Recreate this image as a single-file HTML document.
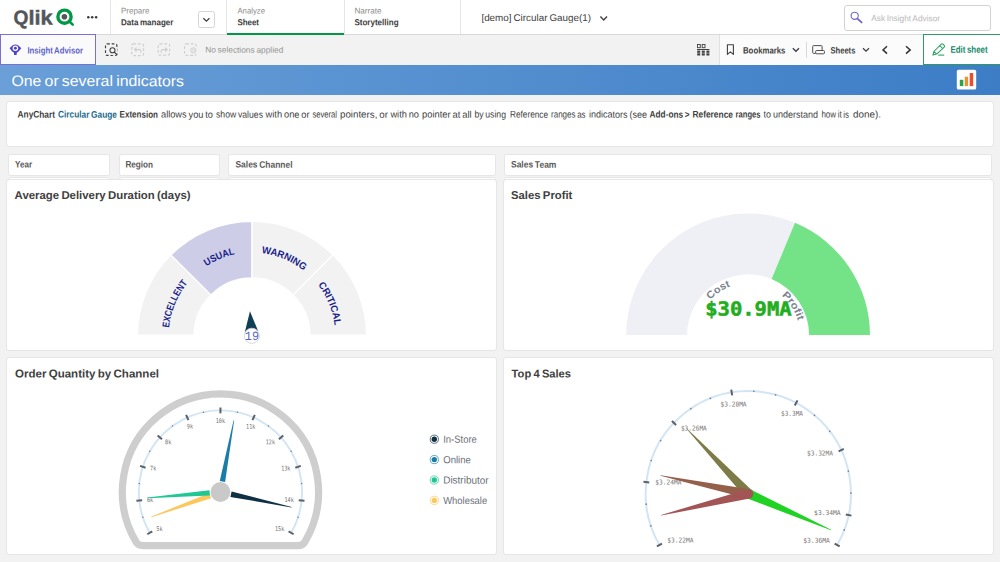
<!DOCTYPE html>
<html lang="en"><head><meta charset="utf-8"><title>[demo] Circular Gauge(1) - One or several indicators</title>
<style>
*{box-sizing:border-box;margin:0;padding:0}
html,body{width:1000px;height:562px;overflow:hidden;background:#f2f2f2;font-family:"Liberation Sans", sans-serif}
#app{position:relative;width:1000px;height:562px;overflow:hidden;background:#f2f2f2}
.abs{position:absolute}
.t{position:absolute;left:0;top:0;white-space:pre;line-height:1em;word-spacing:-0.075em;transform-origin:0 0;display:block}
#topbar{position:absolute;left:0;top:0;width:1000px;height:34.5px;background:#fff;border-bottom:1px solid #d9d9d9}
.vdiv{position:absolute;top:0;width:1px;height:34px;background:#e6e6e6}
#toolbar{position:absolute;left:0;top:34.5px;width:1000px;height:31px;background:#f2f2f2}
#toolbar-right{position:absolute;left:718.5px;top:34.5px;width:281.5px;height:31px;background:#fbfbfb;border-left:1px solid #e0e0e0}
#insight{position:absolute;left:0;top:34.4px;width:95.8px;height:30.6px;background:#fafafa;border:1px solid #7b6fd3}
#editbtn{position:absolute;left:923px;top:34.2px;width:77.5px;height:30.6px;background:#fff;border:1px solid #2f9a62}
#titlebar{position:absolute;left:0;top:65.2px;width:1000px;height:29.4px;background:linear-gradient(90deg,#6a9fd8 0%,#3c7dc6 100%)}
.card{position:absolute;background:#fff;border:1px solid #e5e6e5;border-radius:3px}
#search{position:absolute;left:844px;top:5px;width:146.5px;height:25.5px;border:1px solid #d2d2d2;border-radius:3px;background:#fff}
#ddbtn{position:absolute;left:198px;top:11.3px;width:16.8px;height:16.8px;border:1px solid #d6d6d6;border-radius:2.5px;background:#fff}
svg{position:absolute;left:0;top:0;overflow:visible}
</style></head><body><div id="app">
<div class="card" id="textbox" style="left:6px;top:101px;width:988px;height:46px"></div>
<div class="card filter" style="left:8px;top:154px;width:102px;height:22px;border-radius:2.5px"></div>
<div class="card filter" style="left:8px;top:176.6px;width:102px;height:12px;border-radius:2.5px"></div>
<div class="card filter" style="left:119px;top:154px;width:101px;height:22px;border-radius:2.5px"></div>
<div class="card filter" style="left:119px;top:176.6px;width:101px;height:12px;border-radius:2.5px"></div>
<div class="card filter" style="left:228px;top:154px;width:268px;height:22px;border-radius:2.5px"></div>
<div class="card filter" style="left:228px;top:176.6px;width:268px;height:12px;border-radius:2.5px"></div>
<div class="card filter" style="left:504px;top:154px;width:488px;height:22px;border-radius:2.5px"></div>
<div class="card filter" style="left:504px;top:176.6px;width:488px;height:12px;border-radius:2.5px"></div>
<div class="card panel" id="p1" style="left:6px;top:179px;width:491px;height:172px"></div>
<div class="card panel" id="p2" style="left:503px;top:179px;width:491px;height:172px"></div>
<div class="card panel" id="p3" style="left:6px;top:357px;width:491px;height:198px"></div>
<div class="card panel" id="p4" style="left:503px;top:357px;width:491px;height:198px"></div>
<div id="topbar"></div>
<div class="vdiv" style="left:110.2px"></div>
<div class="vdiv" style="left:226.4px"></div>
<div class="vdiv" style="left:343.6px"></div>
<div class="vdiv" style="left:460.4px"></div>
<div class="abs" style="left:227px;top:32.9px;width:116.8px;height:2.1px;background:#009845"></div>
<div id="ddbtn"></div><div id="search"></div>
<div id="toolbar"></div><div id="toolbar-right"></div>
<div class="abs" style="left:806.2px;top:42px;width:1px;height:16.4px;background:#d9d9d9"></div>
<div id="insight"></div><div id="editbtn"></div><div id="titlebar"></div>
<svg width="1000" height="562" viewBox="0 0 1000 562">
<g id="icons"><circle cx="64.5" cy="16.7" r="6.6" fill="none" stroke="#009845" stroke-width="3.4"/>
<circle cx="64.4" cy="16.7" r="2.8" fill="#54565a"/>
<line x1="69.2" y1="21.2" x2="72.7" y2="24.6" stroke="#009845" stroke-width="2.6" stroke-linecap="round"/>
<circle cx="88.3" cy="17.3" r="1.25" fill="#3a3a3a"/>
<circle cx="92.2" cy="17.3" r="1.25" fill="#3a3a3a"/>
<circle cx="96.1" cy="17.3" r="1.25" fill="#3a3a3a"/>
<path d="M203.4 18.2L206.4 21.2L209.4 18.2" fill="none" stroke="#404040" stroke-width="1.3"/>
<path d="M600.4 16.6L603.7 19.9L607 16.6" fill="none" stroke="#404040" stroke-width="1.4"/>
<circle cx="854.7" cy="15.8" r="3.6" fill="none" stroke="#6f66c9" stroke-width="1.1"/>
<line x1="857.4" y1="18.6" x2="861.6" y2="22.4" stroke="#6f66c9" stroke-width="1.9" stroke-linecap="round"/>
<path d="M9.6 48.2Q15.4 40.6 21.3 48.2Q18.2 52.2 16.7 52.7L16.7 54.9L14.0 54.9L14.0 52.7Q12.6 52.2 9.6 48.2Z" fill="#4f43c6"/>
<circle cx="15.4" cy="48.2" r="2.75" fill="#fff"/>
<circle cx="15.4" cy="48.2" r="1.45" fill="#4f43c6"/>
<rect x="105.5" y="43.9" width="11.4" height="11.4" rx="1.6" fill="none" stroke="#404040" stroke-width="1.15" stroke-dasharray="2.7 1.9"/>
<circle cx="113.2" cy="51.0" r="4.3" fill="#f2f2f2"/>
<circle cx="112.5" cy="50.2" r="2.55" fill="none" stroke="#404040" stroke-width="1.05"/>
<line x1="114.4" y1="52.1" x2="116.9" y2="54.6" stroke="#404040" stroke-width="1.25" stroke-linecap="round"/>
<rect x="131.8" y="43.8" width="11.8" height="11.8" rx="1.6" fill="none" stroke="#cfcfcf" stroke-width="1.15" stroke-dasharray="2.7 1.9"/>
<path d="M134.6 49.6L140.2 49.6Q141.4 50.8 141.0 53.0M136.6 47.6L134.6 49.6L136.6 51.6" fill="none" stroke="#cfcfcf" stroke-width="1.1"/>
<rect x="158.2" y="43.8" width="11.4" height="11.4" rx="1.6" fill="none" stroke="#cfcfcf" stroke-width="1.15" stroke-dasharray="2.7 1.9"/>
<path d="M167.2 49.6L162.0 49.6Q160.8 50.8 161.2 53.0M165.2 47.6L167.2 49.6L165.2 51.6" fill="none" stroke="#cfcfcf" stroke-width="1.1"/>
<rect x="184.6" y="43.8" width="11.6" height="11.6" rx="1.6" fill="none" stroke="#cfcfcf" stroke-width="1.15" stroke-dasharray="2.7 1.9"/>
<rect x="189.8" y="46.8" width="8" height="7.2" fill="#f2f2f2"/>
<circle cx="193.3" cy="50.4" r="2.6" fill="none" stroke="#cfcfcf" stroke-width="1.0"/>
<path d="M192.1 49.2L194.5 51.6M194.5 49.2L192.1 51.6" stroke="#cfcfcf" stroke-width="0.9"/>
<rect x="697.5" y="44.5" width="2.8" height="3.2" fill="none" stroke="#404040" stroke-width="0.9"/>
<rect x="702.2" y="44.5" width="2.8" height="3.2" fill="none" stroke="#404040" stroke-width="0.9"/>
<rect x="697.0" y="49.0" width="12.4" height="1.0" fill="#404040"/>
<rect x="697.2" y="50.6" width="3.0" height="2.2" fill="#404040"/>
<rect x="697.2" y="53.3" width="3.0" height="2.2" fill="#404040"/>
<rect x="701.8" y="50.6" width="3.0" height="2.2" fill="#404040"/>
<rect x="701.8" y="53.3" width="3.0" height="2.2" fill="#404040"/>
<rect x="706.4" y="50.6" width="3.0" height="2.2" fill="#404040"/>
<rect x="706.4" y="53.3" width="3.0" height="2.2" fill="#404040"/>
<path d="M727.4 44.8L733.4 44.8L733.4 54.4L730.4 51.8L727.4 54.4Z" fill="none" stroke="#404040" stroke-width="1.1" stroke-linejoin="round"/>
<path d="M792.8 48.2L795.9 51.3L799.0 48.2" fill="none" stroke="#404040" stroke-width="1.3"/>
<path d="M815.6 53.4L813.6 53.4Q812.7 53.4 812.7 52.5L812.7 46.5Q812.7 45.6 813.6 45.6L821.2 45.6Q822.1 45.6 822.1 46.5L822.1 50.4" fill="none" stroke="#505050" stroke-width="1.0"/>
<rect x="815.7" y="50.5" width="8.7" height="3.3" rx="0.8" fill="none" stroke="#505050" stroke-width="1.0"/>
<path d="M863.0 48.2L866.0 51.2L869.0 48.2" fill="none" stroke="#404040" stroke-width="1.3"/>
<path d="M887.0 46.2L883.0 49.9L887.0 53.6" fill="none" stroke="#333" stroke-width="1.5"/>
<path d="M906.0 46.2L910.2 49.9L906.0 53.6" fill="none" stroke="#333" stroke-width="1.5"/>
<path d="M932.9 55.1L933.9 51.5L941.2 44.2Q942.1 43.5 943.0 44.2L944.2 45.4Q945.0 46.3 944.2 47.2L936.7 54.1Z M939.8 45.6L942.7 48.5 M933.9 51.5L936.6 54.1" fill="none" stroke="#27a35d" stroke-width="1.05" stroke-linejoin="round"/>
<line x1="938.2" y1="55.1" x2="944.2" y2="55.1" stroke="#27a35d" stroke-width="1.1"/>
<rect x="956.8" y="69.8" width="19.4" height="19.8" rx="1.6" fill="#fff"/>
<rect x="959.8" y="79.8" width="3.5" height="6.3" fill="#2da24a"/>
<rect x="964.7" y="76.7" width="3.4" height="9.4" fill="#e2963c"/>
<rect x="969.7" y="73.0" width="3.5" height="13.1" fill="#ea4e2b"/></g>
<g id="gauge1"><clipPath id="g1clip"><rect x="120" y="200" width="270" height="134.6"/></clipPath>
<path d="M137.40 335.90A114.6 114.6 0 0 1 170.97 254.87L210.99 294.89A58.0 58.0 0 0 0 194.00 335.90Z" fill="#f2f2f2" stroke="#fff" stroke-width="1.3" clip-path="url(#g1clip)"/>
<path d="M170.97 254.87A114.6 114.6 0 0 1 252.00 221.30L252.00 277.90A58.0 58.0 0 0 0 210.99 294.89Z" fill="#cdcde8" stroke="#fff" stroke-width="1.3" clip-path="url(#g1clip)"/>
<path d="M252.00 221.30A114.6 114.6 0 0 1 333.03 254.87L293.01 294.89A58.0 58.0 0 0 0 252.00 277.90Z" fill="#f2f2f2" stroke="#fff" stroke-width="1.3" clip-path="url(#g1clip)"/>
<path d="M333.03 254.87A114.6 114.6 0 0 1 366.60 335.90L310.00 335.90A58.0 58.0 0 0 0 293.01 294.89Z" fill="#f2f2f2" stroke="#fff" stroke-width="1.3" clip-path="url(#g1clip)"/>
<path id="g1p0" d="M168.70 335.17A83.3 83.3 0 0 1 192.59 277.51" fill="none"/>
<text font-family='"Liberation Sans", sans-serif' font-size="9.9" font-weight="700" fill="#1a1f8a" text-anchor="middle"><textPath href="#g1p0" startOffset="50%" textLength="49.1" lengthAdjust="spacingAndGlyphs">EXCELLENT</textPath></text>
<path id="g1p1" d="M193.61 276.49A83.3 83.3 0 0 1 251.27 252.60" fill="none"/>
<text font-family='"Liberation Sans", sans-serif' font-size="9.9" font-weight="700" fill="#1a1f8a" text-anchor="middle"><textPath href="#g1p1" startOffset="50%" textLength="31.0" lengthAdjust="spacingAndGlyphs">USUAL</textPath></text>
<path id="g1p2" d="M252.73 252.60A83.3 83.3 0 0 1 310.39 276.49" fill="none"/>
<text font-family='"Liberation Sans", sans-serif' font-size="9.9" font-weight="700" fill="#1a1f8a" text-anchor="middle"><textPath href="#g1p2" startOffset="50%" textLength="46.3" lengthAdjust="spacingAndGlyphs">WARNING</textPath></text>
<path id="g1p3" d="M311.41 277.51A83.3 83.3 0 0 1 335.30 335.17" fill="none"/>
<text font-family='"Liberation Sans", sans-serif' font-size="9.9" font-weight="700" fill="#1a1f8a" text-anchor="middle"><textPath href="#g1p3" startOffset="50%" textLength="44.3" lengthAdjust="spacingAndGlyphs">CRITICAL</textPath></text>
<polygon fill="#0f3f55" points="249.96,311.17 258.18,331.21 244.82,332.21"/>
<circle cx="251.90" cy="335.80" r="7.6" fill="#fff" stroke="#d0d0d6" stroke-width="0.8"/>
<text transform="matrix(1 0.001 0 1 244.80 340.00)" font-family='"Liberation Mono", monospace' font-size="12.6" fill="#4652c4" fill-opacity="0.92" textLength="14.2" lengthAdjust="spacingAndGlyphs">19</text></g>
<g id="gauge2"><clipPath id="g2clip"><rect x="610" y="200" width="280" height="134.9"/></clipPath>
<path d="M626.20 335.40A121.9 121.9 0 0 1 794.95 222.86L771.56 279.04A61.05 61.05 0 0 0 687.05 335.40Z" fill="#eff0f5" clip-path="url(#g2clip)"/>
<path d="M794.95 222.86A121.9 121.9 0 0 1 870.00 335.40L809.15 335.40A61.05 61.05 0 0 0 771.56 279.04Z" fill="#74e388" clip-path="url(#g2clip)"/>
<path id="g2p0" d="M698.27 320.54A52.0 52.0 0 0 1 754.08 283.74" fill="none"/>
<text font-family='"Liberation Sans", sans-serif' font-size="10.2" font-weight="700" fill="#7a8490" text-anchor="middle"><textPath href="#g2p0" startOffset="50%" textLength="24.5" lengthAdjust="spacingAndGlyphs">Cost</textPath></text>
<path id="g2p1" d="M763.22 285.65A52.0 52.0 0 0 1 799.72 341.65" fill="none"/>
<text font-family='"Liberation Sans", sans-serif' font-size="10.2" font-weight="700" fill="#7a8490" text-anchor="middle"><textPath href="#g2p1" startOffset="50%" textLength="30.1" lengthAdjust="spacingAndGlyphs">Profit</textPath></text>
<text transform="matrix(1 0.001 0 1 705.2 315.4)" font-family='"DejaVu Sans Mono", "Liberation Mono", monospace' font-size="19.2" font-weight="700" fill="#20ae20" stroke="#20ae20" stroke-width="0.55" textLength="86.4" lengthAdjust="spacingAndGlyphs">$30.9MA</text></g>
<g id="gauge3"><path d="M136.15 542.16A98.1 98.1 0 1 1 304.75 542.16Q302.58 545.65 298.08 545.65L142.82 545.65Q138.32 545.65 136.15 542.16Z" fill="none" stroke="#cecece" stroke-width="7.2" stroke-linejoin="round"/>
<path d="M149.78 532.80A81.6 81.6 0 1 1 291.12 532.80" fill="none" stroke="#d2e5f4" stroke-width="1.9"/>
<line x1="152.29" y1="531.35" x2="147.27" y2="534.25" stroke="#5b606b" stroke-width="2"/>
<circle cx="142.84" cy="517.22" r="0.8" fill="#7a828c"/>
<line x1="142.18" y1="500.23" x2="136.41" y2="500.83" stroke="#5b606b" stroke-width="2"/>
<circle cx="139.30" cy="483.47" r="0.8" fill="#7a828c"/>
<line x1="145.60" y1="467.68" x2="140.09" y2="465.89" stroke="#5b606b" stroke-width="2"/>
<circle cx="149.78" cy="451.20" r="0.8" fill="#7a828c"/>
<line x1="161.96" y1="439.34" x2="157.65" y2="435.46" stroke="#5b606b" stroke-width="2"/>
<circle cx="172.49" cy="425.98" r="0.8" fill="#7a828c"/>
<line x1="188.44" y1="420.10" x2="186.08" y2="414.81" stroke="#5b606b" stroke-width="2"/>
<circle cx="203.48" cy="412.18" r="0.8" fill="#7a828c"/>
<line x1="220.45" y1="413.30" x2="220.45" y2="407.50" stroke="#5b606b" stroke-width="2"/>
<circle cx="237.42" cy="412.18" r="0.8" fill="#7a828c"/>
<line x1="252.46" y1="420.10" x2="254.82" y2="414.81" stroke="#5b606b" stroke-width="2"/>
<circle cx="268.41" cy="425.98" r="0.8" fill="#7a828c"/>
<line x1="278.94" y1="439.34" x2="283.25" y2="435.46" stroke="#5b606b" stroke-width="2"/>
<circle cx="291.12" cy="451.20" r="0.8" fill="#7a828c"/>
<line x1="295.30" y1="467.68" x2="300.81" y2="465.89" stroke="#5b606b" stroke-width="2"/>
<circle cx="301.60" cy="483.47" r="0.8" fill="#7a828c"/>
<line x1="298.72" y1="500.23" x2="304.49" y2="500.83" stroke="#5b606b" stroke-width="2"/>
<circle cx="298.06" cy="517.22" r="0.8" fill="#7a828c"/>
<line x1="288.61" y1="531.35" x2="293.63" y2="534.25" stroke="#5b606b" stroke-width="2"/>
<text transform="matrix(1 0.001 0 1 156.30 531.00)" font-family='"DejaVu Sans Mono", "Liberation Mono", monospace' font-size="6.4" fill="#74706f" textLength="6.2" lengthAdjust="spacingAndGlyphs">5k</text>
<text transform="matrix(1 0.001 0 1 146.90 502.10)" font-family='"DejaVu Sans Mono", "Liberation Mono", monospace' font-size="6.4" fill="#74706f" textLength="6.2" lengthAdjust="spacingAndGlyphs">6k</text>
<text transform="matrix(1 0.001 0 1 150.10 470.40)" font-family='"DejaVu Sans Mono", "Liberation Mono", monospace' font-size="6.4" fill="#74706f" textLength="6.2" lengthAdjust="spacingAndGlyphs">7k</text>
<text transform="matrix(1 0.001 0 1 165.10 444.20)" font-family='"DejaVu Sans Mono", "Liberation Mono", monospace' font-size="6.4" fill="#74706f" textLength="6.2" lengthAdjust="spacingAndGlyphs">8k</text>
<text transform="matrix(1 0.001 0 1 186.80 428.50)" font-family='"DejaVu Sans Mono", "Liberation Mono", monospace' font-size="6.4" fill="#74706f" textLength="6.2" lengthAdjust="spacingAndGlyphs">9k</text>
<text transform="matrix(1 0.001 0 1 215.80 423.00)" font-family='"DejaVu Sans Mono", "Liberation Mono", monospace' font-size="6.4" fill="#74706f" textLength="9.2" lengthAdjust="spacingAndGlyphs">10k</text>
<text transform="matrix(1 0.001 0 1 246.10 428.70)" font-family='"DejaVu Sans Mono", "Liberation Mono", monospace' font-size="6.4" fill="#74706f" textLength="9.2" lengthAdjust="spacingAndGlyphs">11k</text>
<text transform="matrix(1 0.001 0 1 265.80 444.20)" font-family='"DejaVu Sans Mono", "Liberation Mono", monospace' font-size="6.4" fill="#74706f" textLength="9.2" lengthAdjust="spacingAndGlyphs">12k</text>
<text transform="matrix(1 0.001 0 1 281.20 470.40)" font-family='"DejaVu Sans Mono", "Liberation Mono", monospace' font-size="6.4" fill="#74706f" textLength="9.2" lengthAdjust="spacingAndGlyphs">13k</text>
<text transform="matrix(1 0.001 0 1 284.50 502.10)" font-family='"DejaVu Sans Mono", "Liberation Mono", monospace' font-size="6.4" fill="#74706f" textLength="9.2" lengthAdjust="spacingAndGlyphs">14k</text>
<text transform="matrix(1 0.001 0 1 275.00 531.00)" font-family='"DejaVu Sans Mono", "Liberation Mono", monospace' font-size="6.4" fill="#74706f" textLength="9.2" lengthAdjust="spacingAndGlyphs">15k</text>
<polygon fill="#1a7da8" points="225.09,481.88 234.14,420.50 233.55,420.39 219.78,480.89"/>
<polygon fill="#0f2f44" points="230.44,496.90 291.57,507.55 291.70,506.97 231.58,491.62"/>
<polygon fill="#fbc85e" points="209.37,493.12 151.29,516.58 151.49,517.15 211.20,498.20"/>
<polygon fill="#1fc795" points="209.47,490.17 147.26,497.59 147.31,498.19 209.90,495.56"/>
<circle cx="220.45" cy="492.00" r="9.9" fill="#c9c9c9"/>
<circle cx="434.3" cy="439.2" r="4.1" fill="#fff" stroke="#0f2f44" stroke-width="0.9" stroke-opacity="0.75"/>
<circle cx="434.3" cy="439.2" r="2.7" fill="#0f2f44"/>
<circle cx="434.3" cy="459.6" r="4.1" fill="#fff" stroke="#1a7da8" stroke-width="0.9" stroke-opacity="0.75"/>
<circle cx="434.3" cy="459.6" r="2.7" fill="#1a7da8"/>
<circle cx="434.3" cy="480.0" r="4.1" fill="#fff" stroke="#1fc795" stroke-width="0.9" stroke-opacity="0.75"/>
<circle cx="434.3" cy="480.0" r="2.7" fill="#1fc795"/>
<circle cx="434.3" cy="500.4" r="4.1" fill="#fff" stroke="#fbc85e" stroke-width="0.9" stroke-opacity="0.75"/>
<circle cx="434.3" cy="500.4" r="2.7" fill="#fbc85e"/></g>
<g id="gauge4"><path d="M659.45 545.00A102.6 102.6 0 1 1 837.15 545.00" fill="none" stroke="#d2e5f4" stroke-width="2"/>
<line x1="661.96" y1="543.55" x2="656.93" y2="546.45" stroke="#5b606b" stroke-width="2"/>
<line x1="649.24" y1="482.41" x2="643.48" y2="481.76" stroke="#5b606b" stroke-width="2"/>
<line x1="676.10" y1="424.94" x2="671.90" y2="420.95" stroke="#5b606b" stroke-width="2"/>
<line x1="732.19" y1="395.31" x2="731.25" y2="389.59" stroke="#5b606b" stroke-width="2"/>
<line x1="794.80" y1="405.51" x2="797.50" y2="400.38" stroke="#5b606b" stroke-width="2"/>
<line x1="838.59" y1="451.41" x2="843.84" y2="448.95" stroke="#5b606b" stroke-width="2"/>
<line x1="845.82" y1="514.43" x2="851.49" y2="515.63" stroke="#5b606b" stroke-width="2"/>
<line x1="834.64" y1="543.55" x2="839.67" y2="546.45" stroke="#5b606b" stroke-width="2"/>
<circle cx="650.85" cy="525.80" r="0.85" fill="#7a828c"/>
<circle cx="646.24" cy="504.19" r="0.85" fill="#7a828c"/>
<circle cx="651.21" cy="460.52" r="0.85" fill="#7a828c"/>
<circle cx="660.57" cy="440.50" r="0.85" fill="#7a828c"/>
<circle cx="690.88" cy="408.67" r="0.85" fill="#7a828c"/>
<circle cx="710.42" cy="398.35" r="0.85" fill="#7a828c"/>
<circle cx="753.79" cy="391.25" r="0.85" fill="#7a828c"/>
<circle cx="775.60" cy="394.80" r="0.85" fill="#7a828c"/>
<circle cx="814.48" cy="415.30" r="0.85" fill="#7a828c"/>
<circle cx="829.73" cy="431.29" r="0.85" fill="#7a828c"/>
<circle cx="848.38" cy="471.09" r="0.85" fill="#7a828c"/>
<circle cx="850.90" cy="493.04" r="0.85" fill="#7a828c"/>
<circle cx="844.28" cy="529.97" r="0.85" fill="#7a828c"/>
<text transform="matrix(1 0.001 0 1 667.3 542.45)" font-family='"DejaVu Sans Mono", "Liberation Mono", monospace' font-size="6.7" fill="#74706f" textLength="26.10" lengthAdjust="spacingAndGlyphs">$3.22MA</text>
<text transform="matrix(1 0.001 0 1 655.3 484.55)" font-family='"DejaVu Sans Mono", "Liberation Mono", monospace' font-size="6.7" fill="#74706f" textLength="26.10" lengthAdjust="spacingAndGlyphs">$3.24MA</text>
<text transform="matrix(1 0.001 0 1 680.9 430.45)" font-family='"DejaVu Sans Mono", "Liberation Mono", monospace' font-size="6.7" fill="#74706f" textLength="25.90" lengthAdjust="spacingAndGlyphs">$3.26MA</text>
<text transform="matrix(1 0.001 0 1 720.5 406.45)" font-family='"DejaVu Sans Mono", "Liberation Mono", monospace' font-size="6.7" fill="#74706f" textLength="26.10" lengthAdjust="spacingAndGlyphs">$3.28MA</text>
<text transform="matrix(1 0.001 0 1 781.0 415.85)" font-family='"DejaVu Sans Mono", "Liberation Mono", monospace' font-size="6.7" fill="#74706f" textLength="22.00" lengthAdjust="spacingAndGlyphs">$3.3MA</text>
<text transform="matrix(1 0.001 0 1 807.0 455.45)" font-family='"DejaVu Sans Mono", "Liberation Mono", monospace' font-size="6.7" fill="#74706f" textLength="26.00" lengthAdjust="spacingAndGlyphs">$3.32MA</text>
<text transform="matrix(1 0.001 0 1 814.1 514.95)" font-family='"DejaVu Sans Mono", "Liberation Mono", monospace' font-size="6.7" fill="#74706f" textLength="26.50" lengthAdjust="spacingAndGlyphs">$3.34MA</text>
<text transform="matrix(1 0.001 0 1 803.3 542.65)" font-family='"DejaVu Sans Mono", "Liberation Mono", monospace' font-size="6.7" fill="#74706f" textLength="26.50" lengthAdjust="spacingAndGlyphs">$3.36MA</text>
<polygon fill="#7d7b47" points="752.08,490.60 686.83,428.44 686.47,428.79 745.12,497.20"/>
<circle cx="748.60" cy="493.90" r="4.8" fill="#7d7b47"/>
<polygon fill="#956049" points="749.58,489.20 660.55,475.25 660.45,475.74 747.62,498.60"/>
<circle cx="748.60" cy="493.90" r="4.8" fill="#956049"/>
<polygon fill="#1fd224" points="746.68,498.30 830.97,530.16 831.17,529.70 750.52,489.50"/>
<circle cx="748.60" cy="493.90" r="4.8" fill="#1fd224"/>
<polygon fill="#a35556" points="747.46,489.24 661.10,514.97 661.22,515.46 749.74,498.56"/>
<circle cx="748.60" cy="493.90" r="4.8" fill="#a35556"/></g>
</svg>
<div class="grp" id="topbar-labels">
<span class="t" style="font-size:20.2px;font-weight:700;color:#54565a;transform:matrix(0.9489,0.001,0,1,13.60,7.55);-webkit-text-stroke:0.45px #54565a;">Q</span>
<span class="t" style="font-size:20.2px;font-weight:700;color:#54565a;transform:matrix(1.0778,0.001,0,1,28.50,7.55);-webkit-text-stroke:0.45px #54565a;">lik</span>
<span class="t" style="font-size:8.2px;font-weight:400;color:#8a8a8a;transform:matrix(0.9746,0.001,0,1,121.00,7.55);">Prepare</span>
<span class="t" style="font-size:8.9px;font-weight:700;color:#404040;transform:matrix(0.9030,0.001,0,1,121.00,18.30);">Data manager</span>
<span class="t" style="font-size:8.2px;font-weight:400;color:#8a8a8a;transform:matrix(0.9471,0.001,0,1,237.40,7.55);">Analyze</span>
<span class="t" style="font-size:8.9px;font-weight:700;color:#404040;transform:matrix(0.8936,0.001,0,1,237.40,18.30);">Sheet</span>
<span class="t" style="font-size:8.2px;font-weight:400;color:#8a8a8a;transform:matrix(0.9959,0.001,0,1,354.40,7.55);">Narrate</span>
<span class="t" style="font-size:8.9px;font-weight:700;color:#404040;transform:matrix(0.9052,0.001,0,1,354.40,18.30);">Storytelling</span>
<span class="t" style="font-size:9.8px;font-weight:400;color:#404040;transform:matrix(1.0049,0.001,0,1,481.40,13.00);">[demo] Circular Gauge(1)</span>
<span class="t" style="font-size:8.6px;font-weight:400;color:#b8b8b8;transform:matrix(0.9648,0.001,0,1,871.20,14.10);">Ask Insight Advisor</span>
</div>
<div class="grp" id="toolbar-labels">
<span class="t" style="font-size:9.2px;font-weight:700;color:#5d62c9;transform:matrix(0.8444,0.001,0,1,27.40,46.40);">Insight Advisor</span>
<span class="t" style="font-size:8.3px;font-weight:400;color:#939393;transform:matrix(1.0061,0.001,0,1,205.20,45.60);">No selections applied</span>
<span class="t" style="font-size:9.2px;font-weight:700;color:#404040;transform:matrix(0.8472,0.001,0,1,743.00,46.40);">Bookmarks</span>
<span class="t" style="font-size:9.2px;font-weight:700;color:#404040;transform:matrix(0.8294,0.001,0,1,830.40,46.40);">Sheets</span>
<span class="t" style="font-size:9.6px;font-weight:700;color:#148a6a;transform:matrix(0.8241,0.001,0,1,950.40,44.80);">Edit sheet</span>
</div>
<div class="grp" id="sheet-title">
<span class="t" style="font-size:15.1px;font-weight:400;color:#ffffff;transform:matrix(1.0499,0.001,0,1,11.40,73.00);">One or several indicators</span>
</div>
<div class="grp" id="intro-text">
<span class="t" style="font-size:9.6px;font-weight:700;color:#404040;transform:matrix(0.8660,0.001,0,1,17.60,109.60);">AnyChart</span>
<span class="t" style="font-size:9.6px;font-weight:700;color:#1b6a8c;transform:matrix(0.8669,0.001,0,1,58.00,109.60);">Circular Gauge</span>
<span class="t" style="font-size:9.6px;font-weight:700;color:#404040;transform:matrix(0.8373,0.001,0,1,119.60,109.60);">Extension</span>
<span class="t" style="font-size:9.6px;font-weight:400;color:#404040;transform:matrix(0.9624,0.001,0,1,161.00,109.60);">allows you to</span>
<span class="t" style="font-size:9.6px;font-weight:400;color:#404040;transform:matrix(0.9025,0.001,0,1,216.00,109.60);">show values</span>
<span class="t" style="font-size:9.6px;font-weight:400;color:#404040;transform:matrix(0.9670,0.001,0,1,265.60,109.60);">with one or</span>
<span class="t" style="font-size:9.6px;font-weight:400;color:#404040;transform:matrix(0.7952,0.001,0,1,312.40,109.60);">several</span>
<span class="t" style="font-size:9.6px;font-weight:400;color:#404040;transform:matrix(1.0152,0.001,0,1,340.00,109.60);">pointers, or</span>
<span class="t" style="font-size:9.6px;font-weight:400;color:#404040;transform:matrix(0.9634,0.001,0,1,390.40,109.60);">with no</span>
<span class="t" style="font-size:9.6px;font-weight:400;color:#404040;transform:matrix(0.9758,0.001,0,1,422.00,109.60);">pointer at all</span>
<span class="t" style="font-size:9.6px;font-weight:400;color:#404040;transform:matrix(0.9025,0.001,0,1,474.40,109.60);">by using</span>
<span class="t" style="font-size:9.6px;font-weight:400;color:#404040;transform:matrix(0.8585,0.001,0,1,510.00,109.60);">Reference</span>
<span class="t" style="font-size:9.6px;font-weight:400;color:#404040;transform:matrix(0.8353,0.001,0,1,551.00,109.60);">ranges as</span>
<span class="t" style="font-size:9.6px;font-weight:400;color:#404040;transform:matrix(0.9405,0.001,0,1,589.00,109.60);">indicators (see</span>
<span class="t" style="font-size:9.6px;font-weight:700;color:#404040;transform:matrix(0.8611,0.001,0,1,649.60,109.60);">Add-ons &gt;</span>
<span class="t" style="font-size:9.6px;font-weight:700;color:#404040;transform:matrix(0.8749,0.001,0,1,692.40,109.60);">Reference</span>
<span class="t" style="font-size:9.6px;font-weight:700;color:#404040;transform:matrix(0.7944,0.001,0,1,735.60,109.60);">ranges</span>
<span class="t" style="font-size:9.6px;font-weight:400;color:#404040;transform:matrix(0.9387,0.001,0,1,763.60,109.60);">to understand</span>
<span class="t" style="font-size:9.6px;font-weight:400;color:#404040;transform:matrix(0.8309,0.001,0,1,821.40,109.60);">how it is</span>
<span class="t" style="font-size:9.6px;font-weight:400;color:#404040;transform:matrix(1.0293,0.001,0,1,853.00,109.60);">done).</span>
</div>
<div class="grp" id="filter-titles">
<span class="t" style="font-size:9.4px;font-weight:700;color:#595959;transform:matrix(0.8631,0.001,0,1,15.00,159.60);">Year</span>
<span class="t" style="font-size:9.4px;font-weight:700;color:#595959;transform:matrix(0.8684,0.001,0,1,125.40,159.60);">Region</span>
<span class="t" style="font-size:9.4px;font-weight:700;color:#595959;transform:matrix(0.8992,0.001,0,1,235.50,159.60);">Sales Channel</span>
<span class="t" style="font-size:9.4px;font-weight:700;color:#595959;transform:matrix(0.9043,0.001,0,1,511.00,159.60);">Sales Team</span>
</div>
<div class="grp" id="panel-titles">
<span class="t" style="font-size:11.4px;font-weight:700;color:#404040;transform:matrix(0.9990,0.001,0,1,14.60,189.90);">Average Delivery Duration (days)</span>
<span class="t" style="font-size:11.4px;font-weight:700;color:#404040;transform:matrix(0.9931,0.001,0,1,511.00,189.90);">Sales Profit</span>
<span class="t" style="font-size:11.4px;font-weight:700;color:#404040;transform:matrix(1.0114,0.001,0,1,15.00,368.40);">Order Quantity by Channel</span>
<span class="t" style="font-size:11.4px;font-weight:700;color:#404040;transform:matrix(0.9778,0.001,0,1,511.60,368.40);">Top 4 Sales</span>
</div>
<div class="grp" id="legend-labels">
<span class="t" style="font-size:10.3px;font-weight:400;color:#6b7079;transform:matrix(0.9197,0.001,0,1,443.20,434.80);">In-Store</span>
<span class="t" style="font-size:10.3px;font-weight:400;color:#6b7079;transform:matrix(0.9272,0.001,0,1,443.20,455.20);">Online</span>
<span class="t" style="font-size:10.3px;font-weight:400;color:#6b7079;transform:matrix(0.9676,0.001,0,1,443.20,475.60);">Distributor</span>
<span class="t" style="font-size:10.3px;font-weight:400;color:#6b7079;transform:matrix(0.9152,0.001,0,1,443.20,496.00);">Wholesale</span>
</div>
</div></body></html>
